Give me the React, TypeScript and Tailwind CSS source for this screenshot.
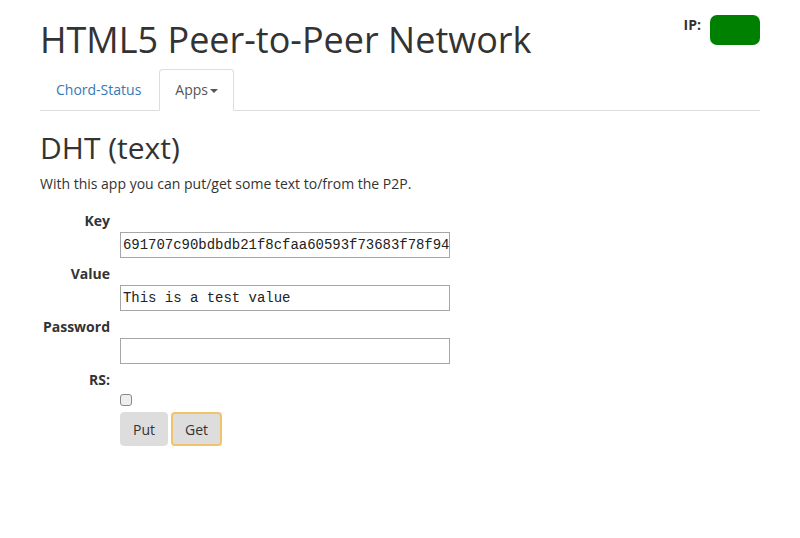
import React from 'react'

const font = { fontFamily: '"Open Sans", "Liberation Sans", sans-serif' }

const Field = ({ label, value }: { label: string; value: string }) => (
  <div className="pt-[6px]">
    <div className="w-[70px] text-right font-bold leading-[20px] text-[#333]">{label}</div>
    <div className="ml-[80px] mt-[1px] w-[330px] h-[26px] border border-[#a6a6a6] pl-[2px] overflow-hidden whitespace-nowrap font-['Liberation_Mono',monospace] text-[14px] leading-[24px] tracking-[-0.03px] text-[#222]">
      {value}
    </div>
  </div>
)

const App: React.FC = () => {
  return (
    <div style={font} className="w-[800px] h-[538px] bg-white px-[40px] text-[14px] text-[#333]">
      <div className="flex justify-between">
        <h1 className="mt-[20px] mb-[10px] text-[36px] leading-[39px] font-normal">HTML5 Peer-to-Peer Network</h1>
        <div className="flex items-start gap-[9px] pt-[15px]">
          <span className="font-bold mt-[1px] leading-[18px]">IP:</span>
          <div className="w-[50px] h-[30px] rounded-[7px] bg-[#008000]"></div>
        </div>
      </div>

      <ul className="flex border-b border-[#ddd]">
        <li className="mb-[-1px] mr-[2px]">
          <a className="block px-[15px] py-[10px] leading-[20px] border border-transparent rounded-t-[4px] text-[#337ab7]">Chord-Status</a>
        </li>
        <li className="mb-[-1px] mr-[2px]">
          <a className="flex items-center px-[15px] py-[10px] leading-[20px] border border-[#ddd] border-b-transparent bg-white rounded-t-[4px] text-[#555]">
            Apps
            <span className="ml-[2px] mt-[1px] w-0 h-0 border-x-[4px] border-x-transparent border-t-[4px] border-t-[#555]"></span>
          </a>
        </li>
      </ul>

      <h2 className="mt-[20px] mb-[10px] text-[30px] leading-[33px] font-normal">DHT (text)</h2>
      <p className="mb-[10px] leading-[20px]">With this app you can put/get some text to/from the P2P.</p>

      <div className="pt-[1px]">
        <Field label="Key" value="691707c90bdbdb21f8cfaa60593f73683f78f94" />
        <Field label="Value" value="This is a test value" />
        <Field label="Password" value="" />
        <div className="pt-[6px]">
          <div className="w-[70px] text-right font-bold leading-[20px]">RS:</div>
          <div className="ml-[80px] mt-[4px] w-[12px] h-[12px] rounded-[3px] border border-[#888] bg-[#eee]"></div>
          <div className="ml-[80px] mt-[6px] flex gap-[3px]">
            <button className="h-[34px] px-[12px] border border-[#ddd] bg-[#ddd] rounded-[4px] text-[14px] text-[#333]">Put</button>
            <button className="h-[34px] px-[12px] border-2 border-[#f0c36d] bg-[#ddd] rounded-[4px] text-[14px] text-[#333]">Get</button>
          </div>
        </div>
      </div>
    </div>
  )
}

export default App
